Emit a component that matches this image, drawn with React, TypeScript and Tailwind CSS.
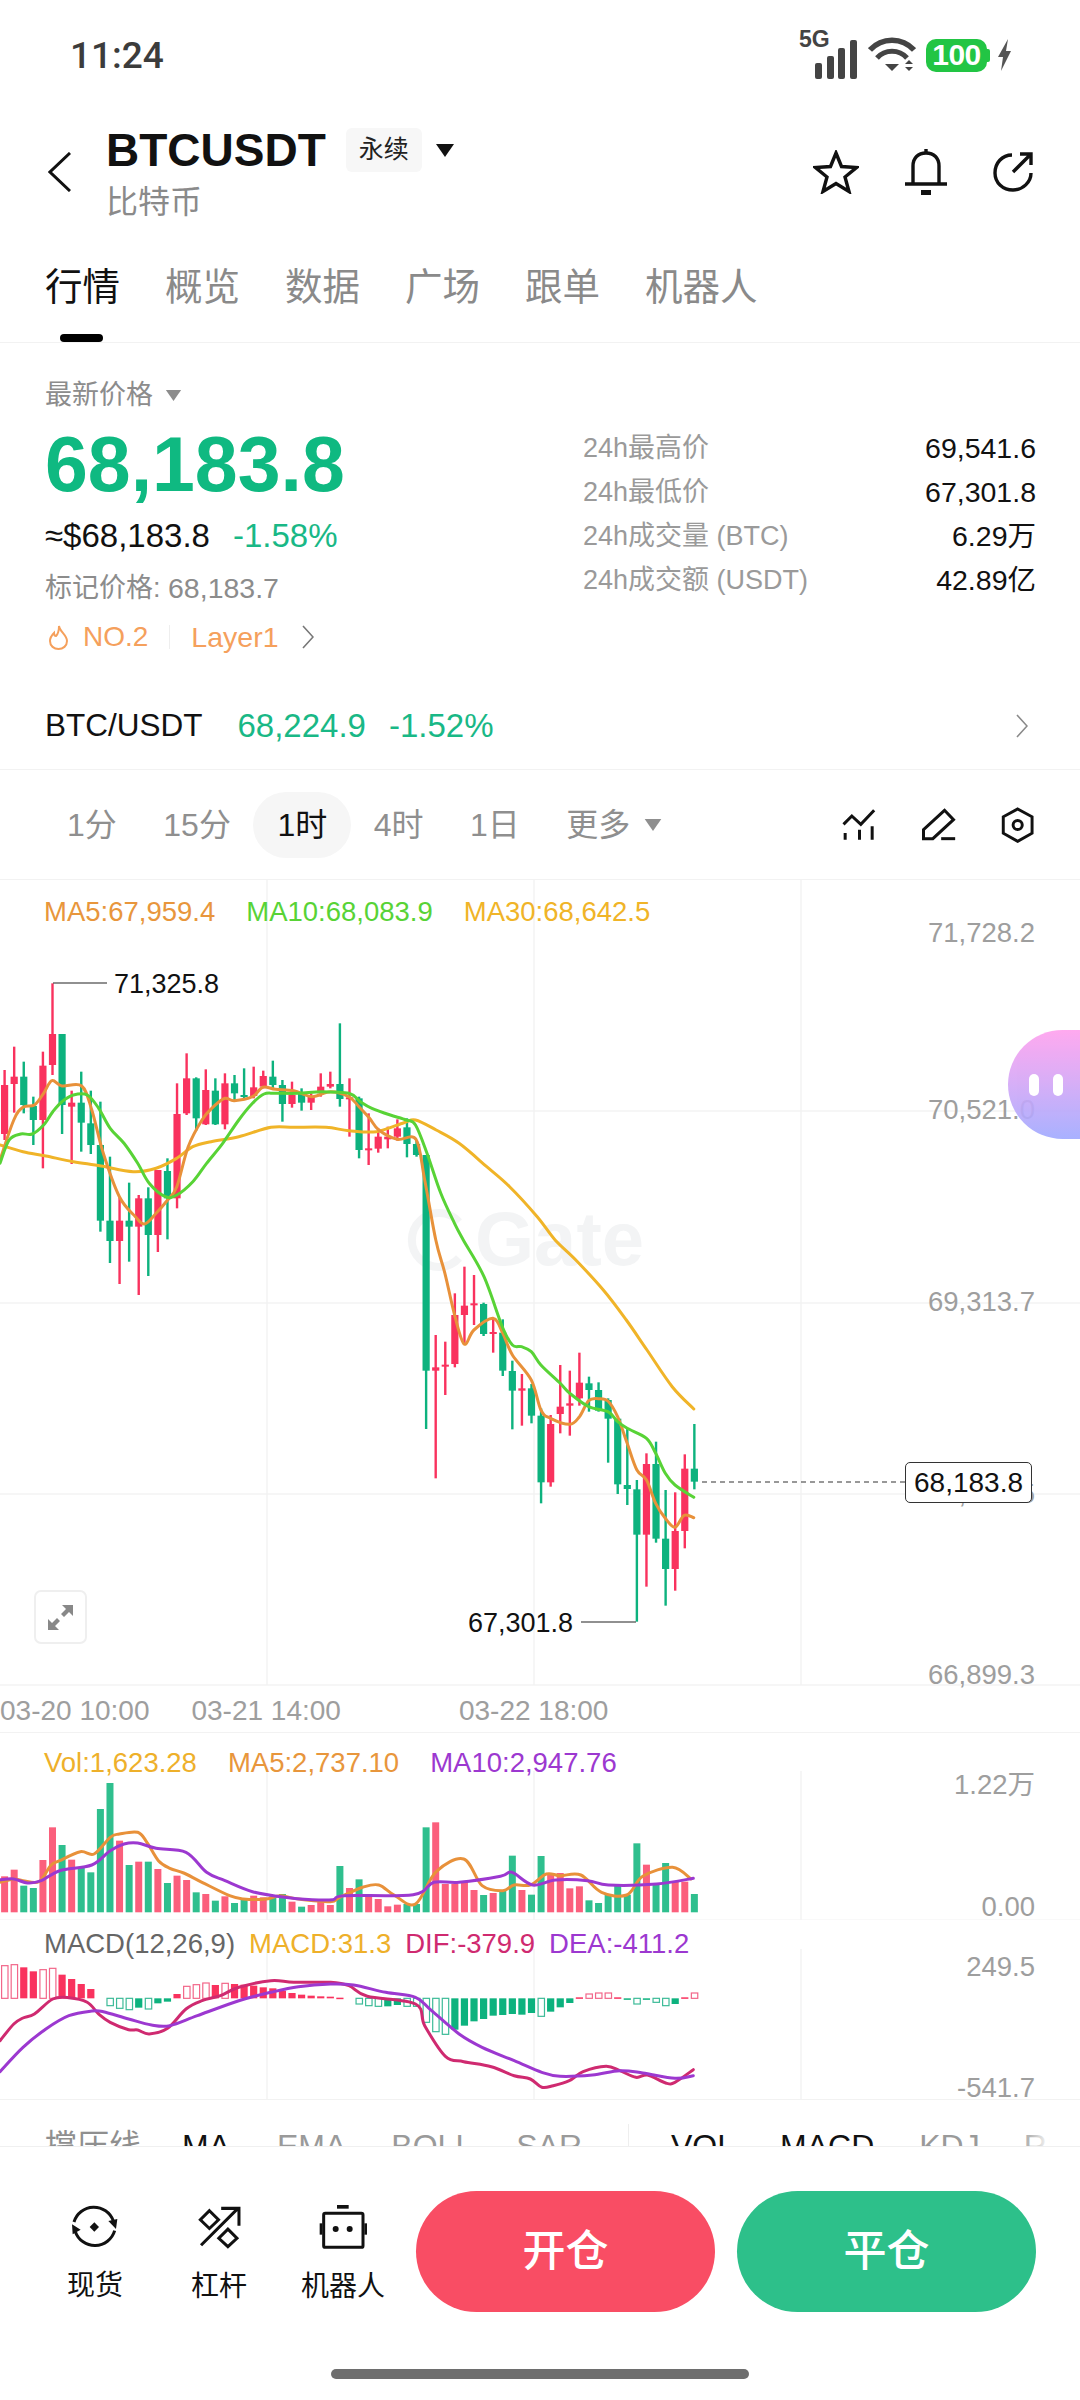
import React from "react";

type Pt = [number, number];
const SX = 2.178;
const cx = (i: number) => 4.6 + 9.58 * i;
const f1 = (pts: Pt[]): Pt[] => pts.map(([x, y]) => [x / SX, 880 + y / 3]);
const f2 = (pts: Pt[]): Pt[] => pts.map(([x, y]) => [360 + x / SX, 1240 + y / 3]);
const f5 = (pts: Pt[]): Pt[] => pts.map(([x, y]) => [x / SX, 1720 + y / 3]);

const smooth = (p: Pt[]) => {
  let d = `M${p[0][0].toFixed(1)} ${p[0][1].toFixed(1)}`;
  for (let i = 0; i < p.length - 1; i++) {
    const a = p[Math.max(i - 1, 0)], b = p[i], c = p[i + 1], e = p[Math.min(i + 2, p.length - 1)];
    const c1: Pt = [b[0] + (c[0] - a[0]) / 6, b[1] + (c[1] - a[1]) / 6];
    const c2: Pt = [c[0] - (e[0] - b[0]) / 6, c[1] - (e[1] - b[1]) / 6];
    d += `C${c1[0].toFixed(1)} ${c1[1].toFixed(1)} ${c2[0].toFixed(1)} ${c2[1].toFixed(1)} ${c[0].toFixed(1)} ${c[1].toFixed(1)}`;
  }
  return d;
};

const RED = "#f9325e";
const GREEN = "#0db27e";

// [colour, wickTop, bodyTop, bodyBottom, wickBottom]
type C = ["r" | "g", number, number, number, number];
const c1: C[] = [
  ["r",570,615,762,780],["r",500,590,612,698],["g",545,590,675,700],["g",650,678,720,795],["r",515,557,720,865],
  ["r",310,462,555,585],["g",462,462,675,762],["r",632,668,680,852],["g",575,668,728,815],["g",632,730,795,822],
  ["g",665,795,1022,1055],["g",830,1022,1083,1149],["r",952,1022,1083,1212],["g",908,1022,1040,1145],["r",945,955,1040,1245],
  ["g",922,955,1065,1188],["r",870,870,1065,1116],["g",835,873,955,1078],["r",610,702,955,985],["r",520,595,700,705],
  ["g",592,595,715,752],["r",568,630,733,735],["g",595,632,733,735],["r",580,610,733,748],["g",585,610,640,665],
  ["g",565,645,650,660],["r",560,622,648,655],["r",572,588,620,625],["g",542,590,615,625],["g",600,615,672,725],
  ["r",605,645,672,683],["g",625,640,668,692],["r",640,650,668,690],["r",580,620,640,650],["r",575,612,620,625],
  ["g",430,612,657,680],["r",595,652,658,770],["g",650,655,810,835],["r",700,805,810,855],["r",745,770,806,818],
  ["r",740,770,778,805],["r",718,745,770,782],["g",715,742,792,832],["g",780,792,825,830],
];
const c2: C[] = [
  ["g",-255,-255,392,567],["r",285,382,392,715],["r",305,374,380,465],["r",160,225,372,382],["r",80,197,225,312],
  ["r",105,190,195,255],["g",188,192,282,288],["r",235,276,280,338],["g",238,278,392,408],["g",362,393,452,568],
  ["r",402,445,452,557],["g",432,445,527,550],["g",505,527,727,790],["r",525,552,727,740],["r",375,500,522,580],
  ["r",392,490,497,587],["r",338,428,475,497],["g",410,430,450,515],["g",427,450,512,515],["g",475,480,536,668],
  ["g",540,536,733,762],["g",565,735,747,795],["g",720,748,884,1145],["r",640,672,884,1040],["g",605,672,896,908],
  ["g",750,896,987,1097],["r",757,873,987,1052],["r",643,686,873,925],["g",552,686,725,748],
];
const candles = [
  ...c1.map((c) => ({ col: c[0], y: c.slice(1).map((v) => 880 + (v as number) / 3) })),
  ...c2.map((c) => ({ col: c[0], y: c.slice(1).map((v) => 1240 + (v as number) / 3) })),
];

const ma5 = [
  ...f1([[0,840],[30,720],[50,682],[75,675],[95,640],[113,602],[135,618],[178,618],[200,690],[225,820],[260,950],[295,1010],[315,1032],[340,1000],[365,960],[385,920],[410,800],[440,720],[465,680],[490,655],[510,662],[550,650],[572,622],[600,628],[640,632],[680,650],[720,635],[760,650],[782,680],[805,715],[825,750],[865,778],[906,778],[925,900]]),
  ...f2([[165,0],[185,100],[206,225],[227,312],[248,270],[290,235],[311,280],[332,345],[373,420],[394,510],[415,535],[457,553],[478,530],[498,482],[519,476],[540,483],[561,530],[582,610],[603,690],[624,720],[644,790],[665,835],[686,862],[706,826],[727,833]]),
];
const ma10 = [
  ...f1([[0,850],[20,780],[45,762],[70,762],[95,735],[115,695],[135,665],[160,645],[190,645],[215,685],[240,745],[270,790],[300,850],[325,910],[360,950],[385,945],[420,905],[450,850],[485,790],[520,720],[550,670],[575,642],[600,640],[650,640],[700,635],[760,640],[785,665],[810,685],[850,705],[885,720],[905,735],[930,820],[960,940],[990,1030]]),
  ...f2([[225,0],[270,110],[310,260],[332,315],[352,320],[373,335],[394,375],[436,430],[457,460],[498,500],[540,515],[561,545],[582,565],[624,595],[644,640],[665,700],[686,735],[727,772]]),
];
const ma30 = [
  ...f1([[0,795],[50,815],[100,828],[160,845],[220,858],[290,875],[340,865],[385,835],[420,800],[460,785],[520,770],[590,742],[640,742],[710,742],[760,752],[820,755],[880,728],[905,720],[950,750],[1000,790],[1060,860],[1110,920],[1170,1010]]),
  ...f2([[425,0],[470,60],[530,150],[580,240],[625,330],[680,440],[727,507]]),
];

const vols: ["r" | "g", number][] = [
  ["r",472],["r",452],["g",500],["g",507],["r",423],["r",325],["g",378],["r",422],["g",445],["g",460],["g",270],["g",192],["r",365],["g",438],["r",428],["g",428],["r",450],["g",492],["r",470],["r",483],["g",520],["r",525],["g",545],["r",532],["g",552],["g",540],["r",530],["r",535],["g",532],["g",525],["r",548],["g",563],["r",558],["r",548],["r",558],["g",441],["r",507],["g",481],["r",527],["r",540],["r",562],["r",557],["g",555],["g",555],["g",325],["r",310],["r",495],["r",495],["r",488],["r",513],["g",528],["r",522],["g",515],["g",410],["r",513],["g",527],["g",411],["r",465],["r",462],["r",508],["r",502],["g",544],["g",552],["g",527],["g",495],["g",527],["g",373],["r",437],["g",495],["g",432],["r",488],["r",488],["g",525],
];
const vma5 = f5([[0,490],[30,480],[50,485],[85,488],[110,440],[130,425],[175,398],[205,405],[240,355],[260,345],[300,340],[320,370],[345,425],[370,448],[400,462],[440,490],[500,530],[530,540],[580,540],[610,530],[650,540],[720,548],[740,535],[790,505],[825,498],[860,530],[905,555],[950,458],[1010,420],[1050,500],[1095,515],[1120,498],[1155,498],[1190,465],[1220,470],[1265,468],[1310,520],[1365,528],[1400,472],[1465,445],[1505,480]]);
const vma10 = f5([[0,482],[30,480],[60,492],[90,485],[130,455],[200,438],[240,395],[270,375],[300,372],[340,388],[405,400],[450,460],[490,485],[550,518],[620,535],[680,542],[725,542],[750,530],[900,527],[945,490],[1000,490],[1090,472],[1115,460],[1160,498],[1210,483],[1280,485],[1325,498],[1430,495],[1510,478]]);

// [top, hollow]; sign derived from the zero line at 838
const macd: [number, 0 | 1][] = [
  [740,1],[737,1],[745,0],[757,0],[752,1],[748,1],[767,0],[780,0],[795,0],[810,0],[838,0],[860,1],[868,1],[872,1],[866,0],[870,1],[853,0],[848,0],[825,0],[802,1],[797,1],[792,1],[798,0],[793,1],[795,0],[797,0],[800,0],[805,0],[808,0],[815,0],[822,0],[827,0],[830,0],[832,0],[833,0],[836,0],[838,0],[855,1],[860,1],[862,1],[862,0],[858,0],[862,1],[862,1],[910,1],[938,1],[946,1],[932,0],[920,0],[907,0],[900,0],[890,0],[888,0],[885,0],[887,0],[882,0],[892,1],[878,0],[865,0],[852,0],[835,0],[825,1],[822,1],[822,1],[835,0],[842,0],[855,1],[842,0],[850,1],[860,1],[855,0],[835,0],[822,1],
];
const dif = f5([[0,965],[30,915],[50,897],[75,885],[115,840],[150,836],[190,850],[215,885],[240,910],[280,932],[300,933],[325,945],[365,928],[405,870],[440,845],[480,830],[520,805],[590,785],[640,790],[720,790],[760,800],[800,832],[905,855],[925,920],[970,1012],[1010,1028],[1070,1043],[1120,1070],[1155,1080],[1180,1105],[1205,1100],[1240,1085],[1270,1058],[1320,1042],[1350,1055],[1385,1075],[1410,1068],[1450,1092],[1470,1090],[1510,1052]]);
const dea = f5([[0,1058],[50,985],[100,930],[150,890],[200,876],[225,878],[280,900],[330,918],[370,920],[430,890],[520,845],[590,820],[650,803],[720,795],[770,798],[840,820],[905,835],[940,875],[1000,945],[1050,985],[1120,1025],[1180,1060],[1220,1072],[1290,1068],[1350,1055],[1400,1062],[1470,1078],[1510,1070]]);

const Axis = ({ className, children }: { className: string; children: React.ReactNode }) => (
  <span className={`absolute right-[45px] -translate-y-1/2 text-[27.5px] leading-none text-[#9e9e9e] ${className}`}>{children}</span>
);

const Tri = ({ className }: { className: string }) => (
  <svg viewBox="0 0 18 13" className={className}><path d="M0 0H18L9 13Z" fill="currentColor" /></svg>
);

const Chevron = ({ className }: { className: string }) => (
  <svg viewBox="0 0 12 24" className={className} fill="none" stroke="currentColor" strokeWidth="1.6"><path d="M1 1L11 12L1 23" /></svg>
);

export default function App() {
  const tabs = ["行情", "概览", "数据", "广场", "跟单", "机器人"];
  const stats = [
    ["24h最高价", "69,541.6"],
    ["24h最低价", "67,301.8"],
    ["24h成交量 (BTC)", "6.29万"],
    ["24h成交额 (USDT)", "42.89亿"],
  ];
  return (
    <div className="relative w-[1080px] h-[2400px] overflow-hidden bg-white text-black [font-family:'Liberation_Sans','Noto_Sans_CJK_SC',sans-serif]">
      {/* status bar */}
      <div className="h-[110px] flex items-center justify-between pl-[70px] pr-[68px]">
        <span className="[font-family:Roboto,sans-serif] text-[37px] font-medium text-[#3c3c3c] leading-none">11:24</span>
        <div className="flex items-center gap-[10px]">
          <div className="relative w-[60px] h-[50px]">
            <span className="absolute left-[1px] -top-[2px] text-[23px] font-bold leading-none text-[#444]">5G</span>
            <svg viewBox="0 0 60 50" className="w-[60px] h-[50px]" fill="#444">
              <rect x="17" y="33" width="7" height="16" rx="2" />
              <rect x="29" y="26" width="7" height="23" rx="2" />
              <rect x="40" y="18" width="7" height="31" rx="2" />
              <rect x="52" y="10" width="7" height="39" rx="2" />
            </svg>
          </div>
          <svg viewBox="0 0 48 36" className="w-[48px] h-[36px]" fill="none">
            <path d="M2 13C14 0 34 0 46 13" stroke="#444" strokeWidth="5.5" />
            <path d="M9 21C17 12 31 12 39 21" stroke="#444" strokeWidth="5" />
            <path d="M17 27H31L24 34Z" fill="#444" />
            <path d="M37 27L41 23L45 27Z M37 30L45 30L41 34Z" fill="#444" />
          </svg>
          <div className="relative w-[61px] h-[33px] rounded-[10px] bg-[#22c544] flex items-center justify-center">
            <span className="text-[30px] font-bold leading-none text-white tracking-[-0.5px]">100</span>
            <span className="absolute -right-[3px] top-[10px] w-[3px] h-[13px] rounded-r-[2px] bg-[#22c544]" />
          </div>
          <svg viewBox="0 0 15 32" className="w-[15px] h-[32px]"><path d="M11 0L1 18H6L4 32L14 12H9Z" fill="#555" /></svg>
        </div>
      </div>

      {/* header */}
      <div className="h-[124px] mb-[16px] flex items-center pl-[48px] pr-[47px]">
        <svg viewBox="0 0 23 40" className="w-[23px] h-[40px]" fill="none" stroke="#111" strokeWidth="3"><path d="M22 1L2 20L22 39" /></svg>
        <div className="ml-[35px]">
          <div className="h-[60px] flex items-center">
            <span className="text-[46px] font-bold leading-none text-[#111]">BTCUSDT</span>
            <span className="ml-[20px] w-[76px] h-[44px] rounded-[6px] bg-[#f7f7f7] flex items-center justify-center text-[25px] text-[#222]">永续</span>
            <Tri className="ml-[14px] w-[18px] h-[13px] text-[#111]" />
          </div>
          <div className="h-[44px] flex items-center text-[32px] text-[#8a8a8a] leading-none">比特币</div>
        </div>
        <div className="ml-auto flex items-center gap-[46px]">
          <svg viewBox="0 0 46 44" className="w-[46px] h-[44px]" fill="none" stroke="#111" strokeWidth="3.4" strokeLinejoin="miter">
            <path d="M23 3L28.5 16.5L43.5 17.5L32 27L36 41.5L23 33.5L10 41.5L14 27L2.5 17.5L17.5 16.5Z" />
          </svg>
          <svg viewBox="0 0 42 46" className="w-[42px] h-[46px]" fill="none" stroke="#111" strokeWidth="3.4">
            <path d="M8 35V17C8 9 13 4 21 4C29 4 34 9 34 17V35" />
            <path d="M0 35H42M21 0V4" />
            <rect x="16" y="41" width="10" height="5" fill="#111" stroke="none" />
          </svg>
          <svg viewBox="0 0 40 40" className="w-[40px] h-[40px]" fill="none" stroke="#111" strokeWidth="3.4">
            <path d="M19 3C9 3 2 11 2 21C2 31 10 38 20 38C30 38 38 30 38 21" />
            <path d="M20 20L37 3M27 2H38V13" />
          </svg>
        </div>
      </div>

      {/* tabs */}
      <div className="h-[93px] flex gap-[45px] pl-[45px] border-b border-[#f2f2f2]">
        {tabs.map((t, i) => (
          <div key={t} className={`relative h-[92px] pt-[19px] text-[37.5px] leading-[37px] ${i === 0 ? "text-[#111]" : "text-[#8a8a8a]"}`}>
            {t}
            {i === 0 && <span className="absolute bottom-0 left-[15px] w-[43px] h-[8px] rounded-full bg-black" />}
          </div>
        ))}
      </div>

      {/* stats */}
      <div className="border-b border-[#f2f2f2]">
        <div className="flex pl-[45px] pr-[44px] pt-[29px]">
          <div className="w-[538px]">
            <div className="h-[46px] flex items-center gap-[12px] text-[27px] text-[#8c8c8c]">
              最新价格
              <Tri className="w-[17px] h-[11px] text-[#8c8c8c]" />
            </div>
            <div className="h-[92px] flex items-center text-[77px] font-bold leading-none text-[#0fb981]">68,183.8</div>
            <div className="h-[52px] flex items-center gap-[23px] text-[33px]">
              <span className="text-[#111]">≈$68,183.8</span>
              <span className="text-[#19b886]">-1.58%</span>
            </div>
            <div className="h-[52px] flex items-center text-[27px] text-[#8c8c8c]">标记价格:&nbsp;<span className="text-[28.5px]">68,183.7</span></div>
            <div className="h-[46px] flex items-center text-[27px] text-[#f5a05c]">
              <svg viewBox="0 0 21 25" className="ml-[3px] w-[21px] h-[25px]" fill="none" stroke="#f5a05c" strokeWidth="2">
                <path d="M11 1C12 7 19 10 19 16C19 21 15 24 10.500 24C6 24 2 21 2 16C2 12 4 10 6 8C6 10 7 11 8 11C10 9 11 5 11 1Z" />
              </svg>
              <span className="ml-[14px] text-[28px]">NO.2</span>
              <span className="ml-[21px] w-px h-[24px] bg-[#eeeeee]" />
              <span className="ml-[21px] text-[28.5px]">Layer1</span>
              <Chevron className="ml-[23px] w-[12px] h-[24px] text-[#777]" />
            </div>
          </div>
          <div className="flex-1 pt-[54px]">
            {stats.map(([k, v]) => (
              <div key={k} className="h-[44px] flex items-center justify-between text-[27px]">
                <span className="text-[#9a9a9a]">{k}</span>
                <span className="text-[#111] text-[28.5px]">{v}</span>
              </div>
            ))}
          </div>
        </div>
        <div className="mt-[36px] mb-[13px] h-[60px] flex items-center pl-[45px] pr-[52px] text-[33px]">
          <span className="text-[#111] text-[31.5px]">BTC/USDT</span>
          <span className="ml-[35px] text-[#19b886]">68,224.9</span>
          <span className="ml-[23px] text-[#19b886]">-1.52%</span>
          <Chevron className="ml-auto w-[12px] h-[24px] text-[#8a8a8a]" />
        </div>
      </div>

      {/* timeframes */}
      <div className="h-[110px] flex items-center pl-[67px] pr-[44px] border-b border-[#f2f2f2]">
        <div className="flex items-center gap-[46.5px] text-[32px] text-[#8f8f8f] leading-none">
          <span>1分</span>
          <span>15分</span>
          <span className="-mx-[24px] px-[24px] h-[66px] flex items-center rounded-full bg-[#f6f6f6] text-[#111]">1时</span>
          <span>4时</span>
          <span>1日</span>
          <span className="flex items-center gap-[14px]">更多<Tri className="w-[18px] h-[12px] text-[#8f8f8f]" /></span>
        </div>
        <div className="ml-auto flex items-center gap-[43px]">
          <svg viewBox="30 20 110 105" className="w-[37px] h-[35px]" fill="none" stroke="#111" strokeWidth="9">
            <path d="M40 72L65 47L92 72L132 30M45 118V98M88 118V88M126 118V78" />
          </svg>
          <svg viewBox="272 20 110 105" className="w-[37px] h-[35px]" fill="none" stroke="#111" strokeWidth="9">
            <path d="M345 30L372 58L310 115H282V88Z" /><path d="M335 115H377" />
          </svg>
          <svg viewBox="512 20 110 110" className="w-[36px] h-[36px]" fill="none" stroke="#111" strokeWidth="9">
            <path d="M566 26L610 50V100L566 125L522 100V50Z" /><circle cx="566" cy="75" r="14" />
          </svg>
        </div>
      </div>

      {/* main kline panel */}
      <div className="relative h-[853px] border-b border-[#f2f2f2]">
        <span className="absolute left-[475px] top-[359px] -translate-y-1/2 text-[76px] font-bold leading-none text-[#f3f4f5]">Gate</span>
        <svg viewBox="0 880 1080 853" className="absolute inset-0 w-[1080px] h-[853px]">
          <g stroke="#f3f3f3" strokeWidth="1.5">
            <path d="M0 1111H1080M0 1303H1080M0 1494H1080M0 1685H1080M267 880V1685M534 880V1685M801 880V1685" fill="none" />
          </g>
          <path d="M459 1222A27 27 0 1 0 459 1258" fill="none" stroke="#f3f4f5" strokeWidth="8" />
          {candles.map((c, i) => (
            <g key={i} fill={c.col === "r" ? RED : GREEN}>
              <rect x={cx(i) - 1.2} y={c.y[0]} width="2.4" height={c.y[3] - c.y[0]} />
              <rect x={cx(i) - 3.6} y={c.y[1]} width="7.2" height={Math.max(c.y[2] - c.y[1], 2)} />
            </g>
          ))}
          <g fill="none" strokeWidth="3" strokeLinejoin="round" strokeLinecap="round">
            <path d={smooth(ma30)} stroke="#f0b428" />
            <path d={smooth(ma5)} stroke="#e8913a" />
            <path d={smooth(ma10)} stroke="#58d336" />
          </g>
          <path d="M53 983H107" stroke="#222" strokeWidth="1.2" />
          <path d="M581 1622H636" stroke="#222" strokeWidth="1.2" />
          <path d="M702 1482H905" stroke="#333" strokeWidth="1.2" strokeDasharray="5 4" />
        </svg>

        <div className="absolute left-[44px] top-[32px] -translate-y-1/2 flex text-[27.5px] leading-none">
          <span className="text-[#e8963c]">MA5:67,959.4</span>
          <span className="ml-[31px] text-[#58d336]">MA10:68,083.9</span>
          <span className="ml-[31px] text-[#f0b428]">MA30:68,642.5</span>
        </div>

        <Axis className="top-[53px]">71,728.2</Axis>
        <Axis className="top-[230px]">70,521.0</Axis>
        <Axis className="top-[422px]">69,313.7</Axis>
        <Axis className="top-[614px]">68,106.5</Axis>
        <Axis className="top-[795px]">66,899.3</Axis>

        <span className="absolute left-[114px] top-[104px] -translate-y-1/2 text-[27px] leading-none text-[#111]">71,325.8</span>
        <span className="absolute left-[468px] top-[743px] -translate-y-1/2 text-[27px] leading-none text-[#111]">67,301.8</span>
        <span className="absolute left-[905px] top-[582px] w-[127px] h-[41px] flex items-center justify-center rounded-[5px] border border-[#333] bg-white text-[28px] leading-none text-[#111]">68,183.8</span>

        <div className="absolute left-[34px] top-[710px] w-[53px] h-[54px] rounded-[7px] border-2 border-[#efefef] bg-white flex items-center justify-center">
          <svg viewBox="0 0 25 25" className="w-[25px] h-[25px]" fill="#888">
            <path d="M14 0H25V11L21 7L16 12L13 9L18 4Z" />
            <path d="M0 14V25H11L7 21L12 16L9 13L4 18Z" />
          </svg>
        </div>

        <div className="absolute left-0 top-[831px] -translate-y-1/2 flex text-[28px] leading-none text-[#9e9e9e]">
          <span>03-20 10:00</span>
          <span className="ml-[42px]">03-21 14:00</span>
          <span className="ml-[118px]">03-22 18:00</span>
        </div>

        {/* floating mascot */}
        <div className="absolute right-0 top-[150px] w-[72px] h-[109px] rounded-l-[55px] bg-gradient-to-b from-[#ffa0ee] to-[#9fa9ff] opacity-90 flex items-center pl-[21px] gap-[14px]">
          <span className="w-[10px] h-[22px] rounded-full bg-white" />
          <span className="w-[10px] h-[22px] rounded-full bg-white" />
        </div>
      </div>

      {/* volume panel */}
      <div className="relative h-[187px] border-b border-[#f9f9f9]">
        <svg viewBox="0 1734 1080 187" className="absolute inset-0 w-[1080px] h-[187px]">
          <path d="M267 1772V1921M534 1772V1921M801 1772V1921" stroke="#f3f3f3" strokeWidth="1.5" />
          {vols.map(([c, t], i) => (
            <rect key={i} x={cx(i) - 3.5} y={1720 + t / 3} width="7" height={1913.3 - (1720 + t / 3)} fill={c === "r" ? "#fb5f7c" : "#2fbf8e"} />
          ))}
          <g fill="none" strokeWidth="3" strokeLinejoin="round" strokeLinecap="round">
            <path d={smooth(vma5)} stroke="#e8913a" />
            <path d={smooth(vma10)} stroke="#9c38d0" />
          </g>
        </svg>
        <div className="absolute left-[44px] top-[30px] -translate-y-1/2 flex text-[27.5px] leading-none">
          <span className="text-[#eeb02a]">Vol:1,623.28</span>
          <span className="ml-[31px] text-[#e8963c]">MA5:2,737.10</span>
          <span className="ml-[31px] text-[#9c38d0]">MA10:2,947.76</span>
        </div>
        <Axis className="top-[52px]">1.22万</Axis>
        <Axis className="top-[174px]">0.00</Axis>
      </div>

      {/* macd panel */}
      <div className="relative h-[180px] border-b border-[#f2f2f2]">
        <svg viewBox="0 1921 1080 179" className="absolute inset-0 w-[1080px] h-[179px]">
          <path d="M267 1950V2100M534 1950V2100M801 1950V2100" stroke="#f3f3f3" strokeWidth="1.5" />
          {macd.map(([t, h], i) => {
            const zero = 1720 + 838 / 3;
            const y = 1720 + t / 3;
            if (Math.abs(y - zero) < 0.5) return null;
            const up = y < zero;
            const top = Math.min(y, zero);
            const ht = Math.max(Math.abs(y - zero), 1.5);
            const col = up ? RED : GREEN;
            return h ? (
              <rect key={i} x={cx(i) - 3} y={top} width="6.400" height={ht} fill="#fff" stroke={up ? "#f2678a" : "#3dbb98"} strokeWidth="1.2" />
            ) : (
              <rect key={i} x={cx(i) - 3.6} y={top} width="7.200" height={ht} fill={col} />
            );
          })}
          <g fill="none" strokeWidth="3" strokeLinejoin="round" strokeLinecap="round">
            <path d={smooth(dif)} stroke="#cf2a70" />
            <path d={smooth(dea)} stroke="#9c38d0" />
          </g>
        </svg>
        <div className="absolute left-[44px] top-[24px] -translate-y-1/2 flex text-[27.5px] leading-none">
          <span className="text-[#666666]">MACD(12,26,9)</span>
          <span className="ml-[14px] text-[#eeb02a]">MACD:31.3</span>
          <span className="ml-[14px] text-[#cf2a70]">DIF:-379.9</span>
          <span className="ml-[14px] text-[#9c38d0]">DEA:-411.2</span>
        </div>
        <Axis className="top-[47px]">249.5</Axis>
        <Axis className="top-[168px]">-541.7</Axis>
      </div>

      {/* indicator row, clipped by the bottom bar */}
      <div className="relative h-[46px] overflow-hidden flex items-start pt-[30px] pl-[45px] text-[32px] leading-[32px] whitespace-nowrap text-[#9a9a9a]">
        <span className="text-[#8f8f8f]">撑压线</span>
        <span className="ml-[41px] text-[#111]">MA</span>
        <span className="ml-[47px]">EMA</span>
        <span className="ml-[45px]">BOLL</span>
        <span className="ml-[43px]">SAR</span>
        <span className="ml-[46px] w-px h-[32px] bg-[#eeeeee] -mt-[6px]" />
        <span className="ml-[42px] text-[#111]">VOL</span>
        <span className="ml-[45px] text-[#111]">MACD</span>
        <span className="ml-[45px]">KDJ</span>
        <span className="ml-[44px] text-[#b5b5b5]">RSI</span>
        <span className="absolute right-0 top-0 w-[50px] h-full bg-gradient-to-r from-transparent to-white to-40%" />
      </div>

      {/* bottom bar */}
      <div className="border-t border-[#f0f0f0] bg-white">
        <div className="flex pt-[44px] pl-[33px]">
          <div className="w-[124px] flex flex-col items-center pt-[13px]">
            <svg viewBox="60 35 150 150" className="w-[50px] h-[50px] -mt-[2px]" fill="none" stroke="#111" strokeWidth="9">
              <path d="M72 95A62 62 0 0 1 190 92" />
              <path d="M194 121A62 62 0 0 1 76 124" />
              <path d="M175 92L202 86L198 116Z M66 102L92 118L68 132Z" fill="#111" stroke="none" />
              <path d="M133 96L147 110L133 124L119 110Z" fill="#111" stroke="none" />
            </svg>
            <span className="mt-[17px] text-[28px] leading-[34px] text-[#111]">现货</span>
          </div>
          <div className="w-[124px] flex flex-col items-center pt-[13px]">
            <svg viewBox="430 45 140 140" className="w-[47px] h-[47px] mb-[1px]" fill="none" stroke="#111" strokeWidth="9">
              <path d="M445 168L555 58M505 58H558V110" />
              <path d="M470 65L497 92L470 118L443 92Z" />
              <path d="M525 120L552 147L525 172L498 147Z" />
            </svg>
            <span className="mt-[18px] text-[28px] leading-[34px] text-[#111]">杠杆</span>
          </div>
          <div className="w-[124px] flex flex-col items-center pt-[13px]">
            <svg viewBox="803 42 150 135" className="w-[50px] h-[45px] mb-[3px]" fill="none" stroke="#111" strokeWidth="9">
              <rect x="820" y="70" width="118" height="102" rx="5" />
              <rect x="860" y="45" width="35" height="11" fill="#111" stroke="none" />
              <rect x="808" y="100" width="8" height="34" fill="#111" stroke="none" />
              <rect x="942" y="100" width="8" height="34" fill="#111" stroke="none" />
              <circle cx="856" cy="117" r="9" fill="#111" stroke="none" />
              <circle cx="898" cy="117" r="9" fill="#111" stroke="none" />
            </svg>
            <span className="mt-[18px] text-[28px] leading-[34px] text-[#111]">机器人</span>
          </div>
          <button className="ml-[11px] w-[299px] h-[121px] rounded-full bg-[#f94d64] text-white text-[43px] font-medium">开仓</button>
          <button className="ml-[22px] w-[299px] h-[121px] rounded-full bg-[#2dc08a] text-white text-[43px] font-medium">平仓</button>
        </div>
        <div className="mt-[57px] mx-auto w-[418px] h-[10px] rounded-full bg-[#6e6e6e]" />
      </div>
    </div>
  );
}
